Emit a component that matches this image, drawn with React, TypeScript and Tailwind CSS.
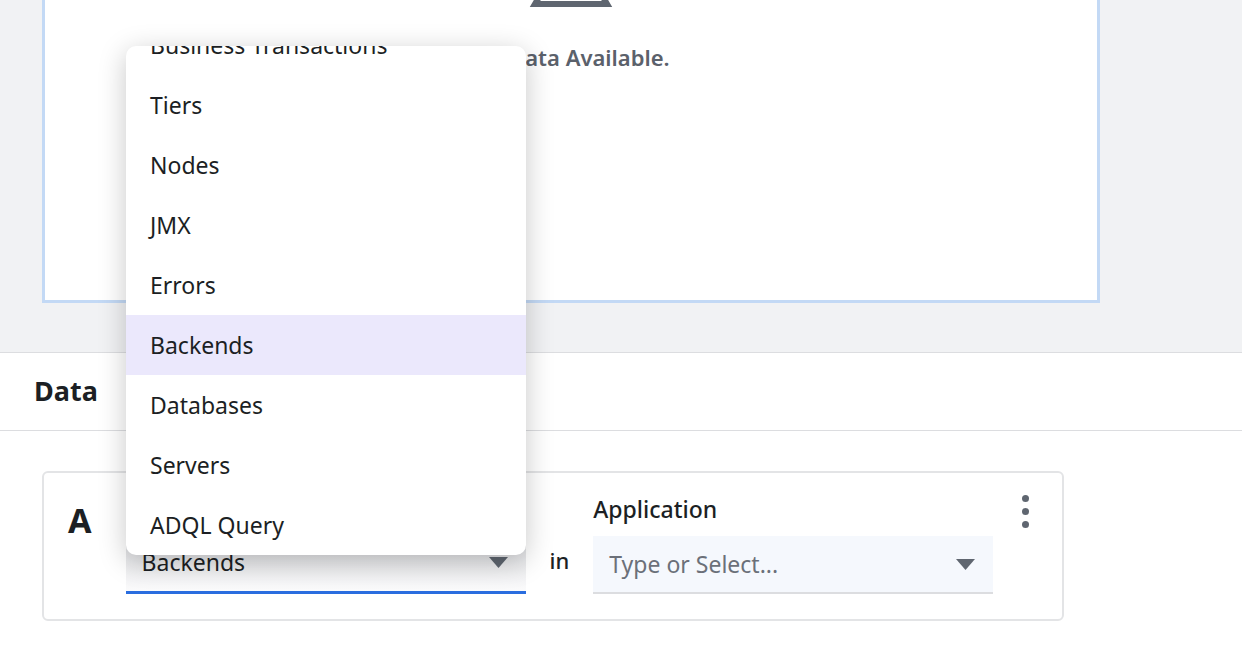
import * as React from "react";

const items = ["Business Transactions", "Tiers", "Nodes", "JMX", "Errors", "Backends", "Databases", "Servers", "ADQL Query"];

function Caret() {
  return (
    <svg width="19" height="11" viewBox="0 0 19 11" className="shrink-0">
      <path d="M0 0 L19 0 L9.5 11 Z" fill="#5f6670" />
    </svg>
  );
}

export default function App() {
  return (
    <div className="relative h-[668px] w-[1242px] overflow-hidden bg-[#f1f2f4] font-['Liberation_Sans',Arial,sans-serif] text-[#1c1f24]">
      <div className="h-[362px] px-[42px]">
        <div className="relative -mt-[10px] flex h-[313px] w-[1058px] flex-col items-center border-[3px] border-t-0 border-[#c3d9f5] bg-white">
          <svg width="84" height="30" viewBox="0 0 84 30" className="mt-[-8px] ml-[-1px]">
            <path d="M42 -40 L78 22 L6 22 Z" fill="none" stroke="#5f6670" strokeWidth="6" strokeLinejoin="miter" />
            <rect x="39" y="0" width="6" height="10" fill="#5f6670" />
          </svg>
          <div className="mt-[29px] text-[22px] font-semibold text-[#5b616b]">No Data Available.</div>
        </div>
      </div>
      <div className="h-[320px] border-t border-[#dcdde0] bg-white">
        <div className="flex h-[78px] items-center border-b border-[#dcdde0] px-[34px] text-[27px] font-bold">Data</div>
        <div className="px-[42px] pt-[40px]">
          <div className="relative flex h-[150px] w-[1022px] rounded-[6px] border-2 border-[#e3e4e6] bg-white">
            <div className="pl-[24px] pt-[22px] text-[34px] font-bold">A</div>
            <div className="ml-[34px] flex items-end pb-[25px] pt-[20px]">
              <div className="flex h-[60px] w-[400px] items-center justify-between border-b-[3px] border-[#2a6ddf] bg-gradient-to-b from-[#d9dadd] to-[#fbfbfc] pl-[16px] pr-[18px] font-['Roboto',sans-serif] text-[23px]">
                <span>Backends</span>
                <Caret />
              </div>
              <div className="mx-[24px] mb-[17px] self-end font-['Roboto',sans-serif] text-[22px] font-medium">in</div>
              <div className="flex flex-col">
                <div className="mb-[10px] font-['Roboto',sans-serif] text-[23px] font-medium">Application</div>
                <div className="flex h-[58px] w-[400px] items-center justify-between border-b-2 border-[#dcdde0] bg-[#f5f8fd] pl-[16px] pr-[18px] font-['Roboto',sans-serif] text-[23px] text-[#6b7079]">
                  <span>Type or Select...</span>
                  <Caret />
                </div>
              </div>
            </div>
            <div className="absolute right-[33px] top-[22px] flex flex-col gap-[6px]">
              <span className="h-[7px] w-[7px] rounded-full bg-[#5f6670]" />
              <span className="h-[7px] w-[7px] rounded-full bg-[#5f6670]" />
              <span className="h-[7px] w-[7px] rounded-full bg-[#5f6670]" />
            </div>
          </div>
        </div>
      </div>
      <div className="absolute left-[126px] top-[46px] h-[509px] w-[400px] overflow-hidden rounded-[10px] bg-white shadow-[0_6px_28px_rgba(0,0,0,0.22)] font-['Roboto',sans-serif] text-[23px] text-[#1c1f24]">
        <div className="-mt-[31px]">
          {items.map((t) => (
            <div key={t} className={`flex h-[60px] items-center px-[24px] ${t === "Backends" ? "bg-[#ebe8fc]" : ""}`}>
              {t}
            </div>
          ))}
        </div>
      </div>
    </div>
  );
}
